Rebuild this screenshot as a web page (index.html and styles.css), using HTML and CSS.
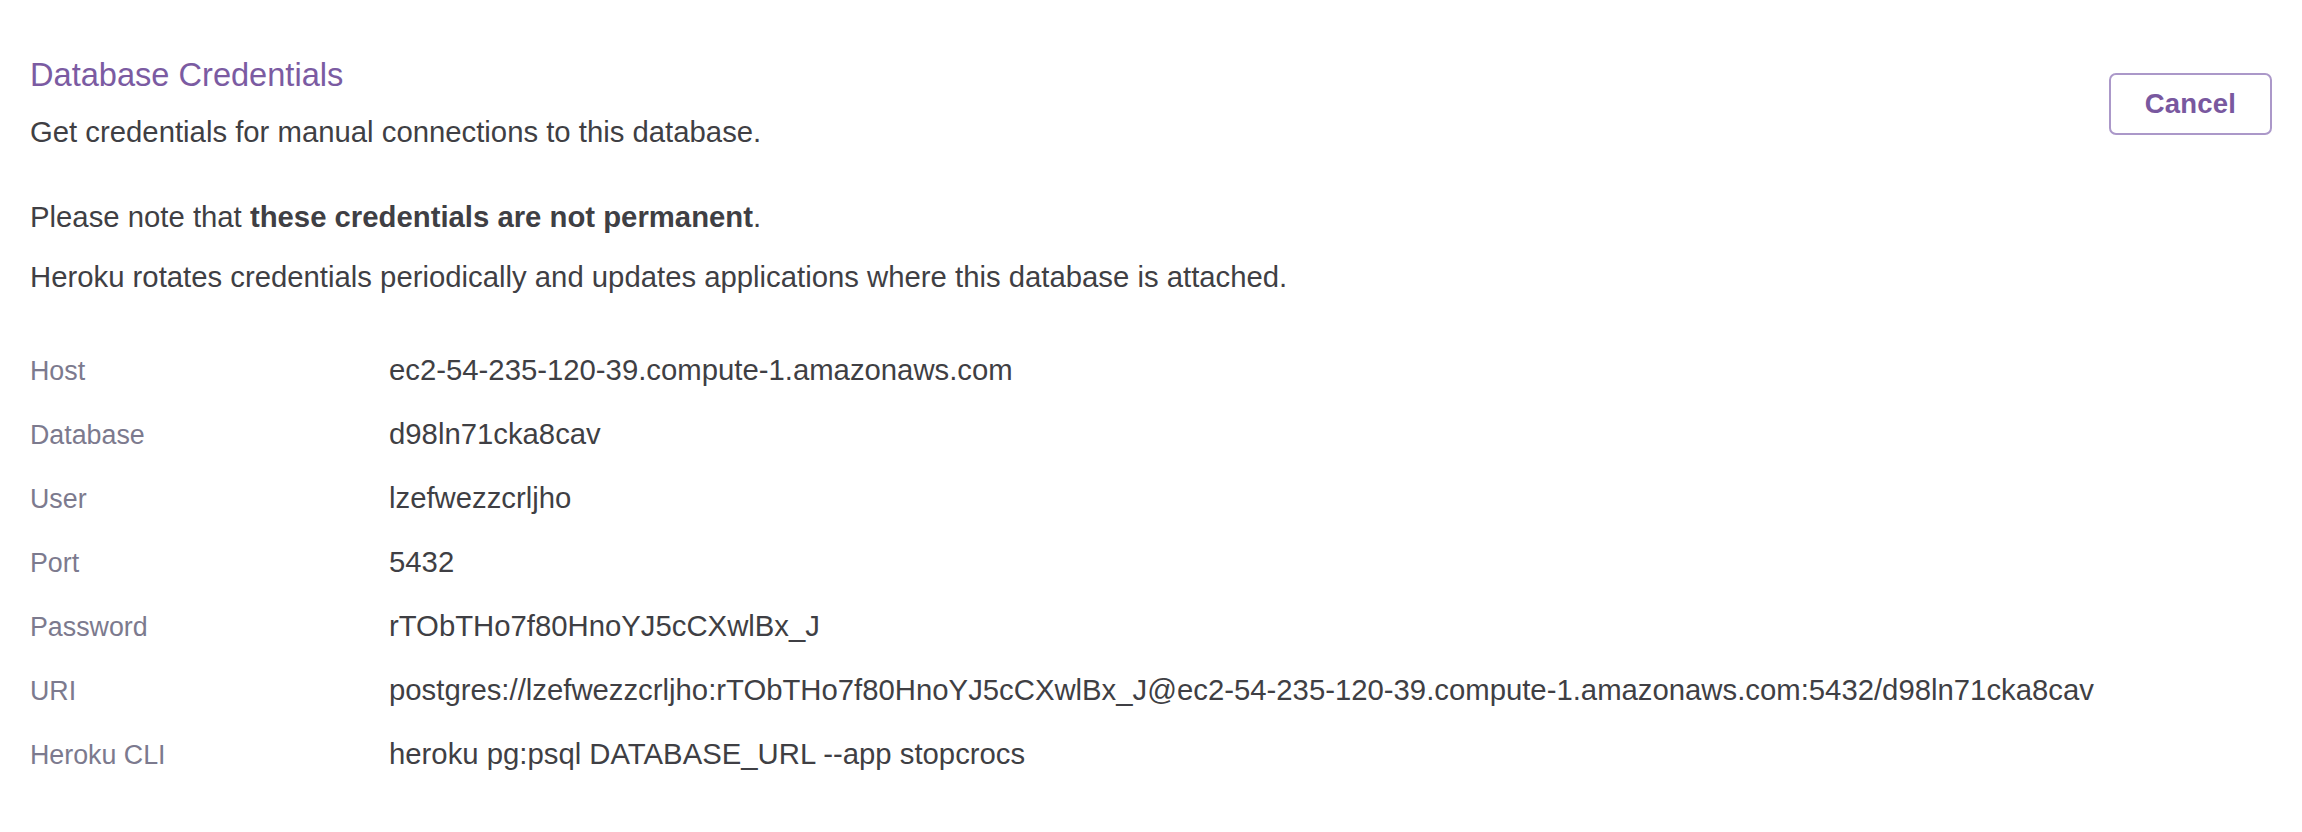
FILE: index.html
```html
<!DOCTYPE html>
<html lang="en">
<head>
<meta charset="utf-8">
<title>Database Credentials</title>
<link rel="stylesheet" href="styles.css">
</head>
<body>
<div class="page">
  <div class="header">
    <div class="header-text">
      <h2 class="title">Database Credentials</h2>
      <p class="subtitle">Get credentials for manual connections to this database.</p>
    </div>
    <button class="btn-cancel" type="button">Cancel</button>
  </div>
  <p class="note first">Please note that <strong>these credentials are not permanent</strong>.</p>
  <p class="note">Heroku rotates credentials periodically and updates applications where this database is attached.</p>
  <dl class="creds">
    <dt>Host</dt><dd>ec2-54-235-120-39.compute-1.amazonaws.com</dd>
    <dt>Database</dt><dd>d98ln71cka8cav</dd>
    <dt>User</dt><dd>lzefwezzcrljho</dd>
    <dt>Port</dt><dd>5432</dd>
    <dt>Password</dt><dd>rTObTHo7f80HnoYJ5cCXwlBx_J</dd>
    <dt>URI</dt><dd>postgres://lzefwezzcrljho:rTObTHo7f80HnoYJ5cCXwlBx_J@ec2-54-235-120-39.compute-1.amazonaws.com:5432/d98ln71cka8cav</dd>
    <dt>Heroku CLI</dt><dd>heroku pg:psql DATABASE_URL --app stopcrocs</dd>
  </dl>
</div>
</body>
</html>
```

FILE: styles.css
```css
* { box-sizing: border-box; }

html, body {
  margin: 0;
  padding: 0;
  background: #ffffff;
}

body {
  font-family: "Liberation Sans", Arial, sans-serif;
  color: #3f3f44;
  font-size: 29.3px;
  line-height: 43.2px;
}

.page {
  padding: 52.5px 30px 40px 30px;
}

.header {
  display: flex;
  justify-content: space-between;
  align-items: flex-start;
}

.title {
  margin: 0;
  font-size: 32.6px;
  line-height: 43px;
  font-weight: normal;
  color: #7b5ba2;
}

.subtitle {
  margin: 14px 0 0 0;
}

.btn-cancel {
  margin-top: 20.5px;
  width: 163px;
  height: 62px;
  border: 2px solid #ab98c9;
  border-radius: 7px;
  background: #ffffff;
  color: #79589f;
  font-family: "Liberation Sans", Arial, sans-serif;
  font-weight: bold;
  font-size: 27.5px;
  letter-spacing: 0.2px;
  padding: 0;
}

.note {
  margin: 17px 0 0 0;
}

.note.first {
  margin-top: 42px;
}

.creds {
  margin: 49.8px 0 0 0;
  display: grid;
  grid-template-columns: 359px 1fr;
  row-gap: 20.8px;
  align-items: baseline;
}

.creds dt {
  font-size: 26.8px;
  line-height: 40px;
  color: #7c7a8e;
}

.creds dd {
  margin: 0;
  white-space: nowrap;
}
```
